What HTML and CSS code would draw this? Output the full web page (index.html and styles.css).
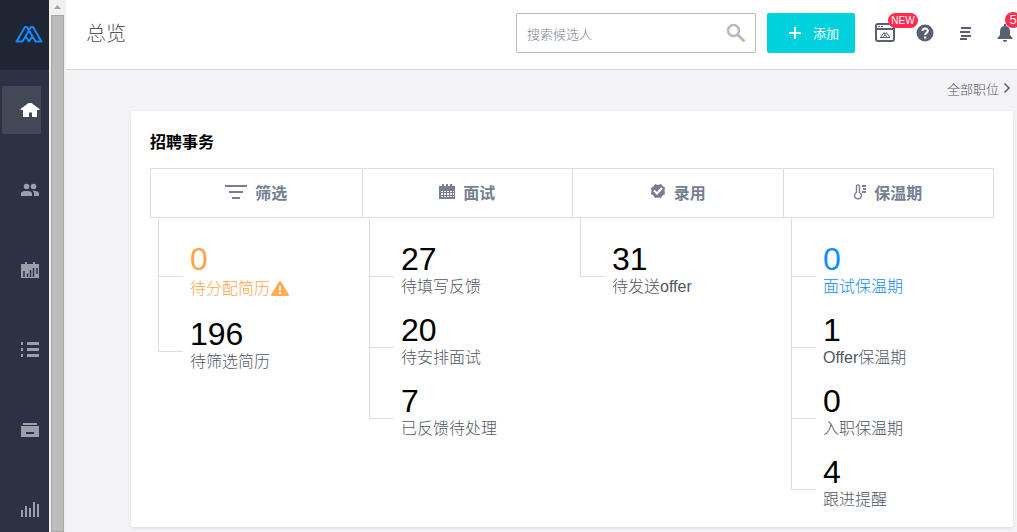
FILE: index.html
```html
<!DOCTYPE html>
<html lang="zh-CN">
<head>
<meta charset="utf-8">
<title>总览</title>
<link rel="stylesheet" href="styles.css">
</head>
<body>
<div class="app">
  <aside class="sidebar">
    <a class="logo" href="#" aria-label="首页">
      <svg width="28" height="18" viewBox="0 0 28 18" fill="none" stroke="#148aff" stroke-width="2" stroke-linejoin="round"><path d="M1.500 16.500 10 2H12L20.500 16.500H26.500L18 2H16L7.500 16.500ZM11 12 14 16.500 17 12"/></svg>
    </a>
    <nav class="nav">
      <a class="nav-item active" href="#" aria-label="总览">
        <svg width="20" height="16" viewBox="0 0 20 16" fill="#fff"><path d="M8.500 1H11.500L19.500 7V8H17V15H12V10.500H9V15H3V8H.5V7Z"/></svg>
      </a>
      <a class="nav-item" href="#" aria-label="候选人">
        <svg width="20" height="14" viewBox="0 0 20 14" fill="#9a9fac"><circle cx="6.500" cy="3.500" r="2.800"/><circle cx="13.500" cy="3.500" r="2.800"/><path d="M1 13V10.500C1 8.500 4 8 6.500 8S12 8.500 12 10.500V13ZM14 13V10.500C14 9.500 13.500 8.500 12.500 8 15 7.500 19 8.500 19 10.500V13Z"/></svg>
      </a>
      <a class="nav-item" href="#" aria-label="面试">
        <svg width="20" height="18" viewBox="0 0 20 18"><path fill="#9a9fac" d="M1 3H5V1H7V3H13V1H15V3H19V17H1Z"/><path stroke="#2c3243" stroke-width="1.500" d="M4 10V16M7.500 12.500V16M10.500 9V16M13.500 7V16M17 7V13"/></svg>
      </a>
      <a class="nav-item" href="#" aria-label="职位">
        <svg width="20" height="18" viewBox="0 0 20 18" fill="#9a9fac"><path d="M1 1H3V4H1ZM7 1H19V4H7ZM1 7H3V10H1ZM7 7H19V10H7ZM1 13H3V16H1ZM7 13H19V16H7Z"/></svg>
      </a>
      <a class="nav-item" href="#" aria-label="人才库">
        <svg width="20" height="16" viewBox="0 0 20 16"><path fill="#9a9fac" d="M3 1H17V3H3ZM1 4H19V15H1Z"/><path fill="#2c3243" d="M6 10H14V12H6Z"/></svg>
      </a>
      <a class="nav-item" href="#" aria-label="报表">
        <svg width="20" height="18" viewBox="0 0 20 18" fill="#9a9fac"><path d="M1 9H3V16H1ZM5 5H7V16H5ZM9 7H11V16H9ZM13 1H15V16H13ZM17 3H19V16H17Z"/></svg>
      </a>
    </nav>
  </aside>
  <div class="scroll-track">
    <svg width="7" height="4" viewBox="0 0 7 4" fill="#a3a3a3"><path d="M3.500 0 7 4H0Z"/></svg>
    <div class="scroll-thumb"></div>
  </div>

  <div class="page">
    <header class="topbar">
      <h1 class="page-title">总览</h1>
      <form class="search">
        <input class="search-input" type="text" placeholder="搜索候选人" aria-label="搜索候选人">
        <button class="search-button" type="button" aria-label="搜索">
          <svg width="20" height="20" viewBox="0 0 20 20" fill="none" stroke="#b5b9c5"><circle cx="7.500" cy="7.500" r="5.500" stroke-width="2.500"/><path stroke-width="3" d="M11.500 11.500 18.500 18.500"/></svg>
        </button>
      </form>
      <button class="add-button" type="button">
        <svg width="13" height="13" viewBox="0 0 13 13" stroke="#fff" stroke-width="2"><path d="M6 0V12M0 6H12"/></svg>
        <span class="add-text">添加</span>
      </button>
      <div class="tools">
        <button class="tool" type="button" aria-label="新功能">
          <svg width="20" height="20" viewBox="0 0 20 20" fill="none" stroke="#5a6070"><rect x="1" y="1" width="18" height="17" rx="2" stroke-width="2"/><path stroke-width="2" d="M1 6H19"/><path stroke-width="1" d="M3 3.500H5M6 3.500H8"/><path d="M5.500 14.500 9 9.500 12 14.500M8 14.500 11.500 9.500 15 14.500H5" stroke-width="1"/></svg>
          <span class="badge badge-new">NEW</span>
        </button>
        <button class="tool" type="button" aria-label="帮助">
          <svg width="18" height="18" viewBox="0 0 18 18"><circle cx="9" cy="9" r="8.500" fill="#5a6070"/><path d="M6.500 7C6.500 3.500 11.800 3.700 11.800 6.700 11.800 8.700 9.200 8.700 9.200 11" fill="none" stroke="#fff" stroke-width="2"/><path fill="#fff" d="M8 12.500H10.300V14.600H8Z"/></svg>
        </button>
        <button class="tool" type="button" aria-label="任务">
          <svg width="12" height="14" viewBox="0 0 12 14" fill="#5a6070"><path d="M2 1H12V3H2ZM1 5H11V7H1ZM2 9H12V11H2ZM1 12H8V14H1Z"/></svg>
        </button>
        <button class="tool" type="button" aria-label="通知">
          <svg width="16" height="18" viewBox="0 0 16 18" fill="#5a6070"><path d="M7 0H9V2C12 2.500 13 5 13 8V11L15.500 14V15H.5V14L3 11V8C3 5 4 2.500 7 2ZM6 16H10C10 18.500 6 18.500 6 16Z"/></svg>
          <span class="badge badge-count">5</span>
        </button>
      </div>
    </header>

    <main class="content">
      <a class="filter" href="#">全部职位
        <svg width="8" height="12" viewBox="0 0 8 12" fill="none" stroke="#5a6070" stroke-width="1.500"><path d="M1.500 1.500 6 6 1.500 10.500"/></svg>
      </a>
      <section class="card">
        <h2 class="card-title">招聘事务</h2>
        <div class="stages">
          <h3 class="stage">
            <svg width="22" height="16" viewBox="0 0 22 16" fill="#777d93"><path d="M0 1H22V3H0ZM4 7H18V9H4ZM7 13H15V15H7Z"/></svg>
            <span>筛选</span>
          </h3>
          <h3 class="stage">
            <svg width="16" height="16" viewBox="0 0 16 16"><path fill="#777d93" d="M0 2H3V0H5V2H7V0H9V2H11V0H13V2H16V15H0Z"/><path fill="#fff" d="M2 7H4V8H2ZM5 7H7V8H5ZM8 7H10V8H8ZM11 7H13V8H11ZM2 9H4V11H2ZM5 9H7V11H5ZM8 9H10V11H8ZM11 9H13V11H11ZM2 12H4V13H2ZM5 12H7V13H5ZM8 12H10V13H8ZM11 12H13V13H11ZM14 7H15V8H14ZM14 9H15V11H14ZM14 12H15V13H14Z"/></svg>
            <span>面试</span>
          </h3>
          <h3 class="stage">
            <svg width="16" height="16" viewBox="0 0 16 16"><path fill="#777d93" d="M5 0 8 1 11 0 12.500 2 15 3.500 14.500 7 15 10 12.500 11.500 11 14 8 13.500 5 14 3.500 11.500 1 10 1.500 7 1 4 3.500 2.500Z"/><path fill="none" stroke="#fff" stroke-width="2" d="M4 6.500 7 9.500 12 4"/></svg>
            <span>录用</span>
          </h3>
          <h3 class="stage">
            <svg width="12" height="16" viewBox="0 0 12 16" fill="none" stroke="#777d93"><path stroke-width="1.400" d="M2.500 8.500V2.500C2.500.3 5.500.3 5.500 2.500V8.500C9 10.500 7.500 14.800 4 14.800S-1 10.500 2.500 8.500Z"/><path stroke-width="2" d="M8 2H12M9 5H12M8 8H12"/></svg>
            <span>保温期</span>
          </h3>
        </div>
        <div class="trees">
          <ul class="tree">
            <li class="node warning"><span class="count">0</span><span class="label">待分配简历<svg width="18" height="16" viewBox="0 0 18 16"><path fill="#ffac52" stroke="#ffac52" stroke-width="2" stroke-linejoin="round" d="M9 1 17 14H1Z"/><path fill="#fff" d="M8 5H10L9.600 10H8.400ZM8 11H10V13H8Z"/></svg></span></li>
            <li class="node"><span class="count">196</span><span class="label">待筛选简历</span></li>
          </ul>
          <ul class="tree">
            <li class="node"><span class="count">27</span><span class="label">待填写反馈</span></li>
            <li class="node"><span class="count">20</span><span class="label">待安排面试</span></li>
            <li class="node"><span class="count">7</span><span class="label">已反馈待处理</span></li>
          </ul>
          <ul class="tree">
            <li class="node"><span class="count">31</span><span class="label">待发送offer</span></li>
          </ul>
          <ul class="tree">
            <li class="node current"><span class="count">0</span><span class="label">面试保温期</span></li>
            <li class="node"><span class="count">1</span><span class="label">Offer保温期</span></li>
            <li class="node"><span class="count">0</span><span class="label">入职保温期</span></li>
            <li class="node"><span class="count">4</span><span class="label">跟进提醒</span></li>
          </ul>
        </div>
      </section>
    </main>
  </div>
</div>
</body>
</html>
```

FILE: styles.css
```css
* { box-sizing: border-box; }
body {
  margin: 0;
  background: #f3f3f5;
  color: #515665;
  font-family: "Liberation Sans", "Noto Sans CJK SC", sans-serif;
  font-size: 16px;
}
h1, h2, h3, ul { margin: 0; padding: 0; }
button { padding: 0; border: 0; background: none; font-family: inherit; }
a { color: inherit; text-decoration: none; }
svg { display: block; flex: none; }

.app { display: flex; height: 100vh; overflow: hidden; }

.sidebar { flex: none; width: 49px; background: #2c3243; }
.logo {
  display: flex;
  align-items: center;
  justify-content: flex-end;
  height: 70px;
  padding: 0 6px 2px 0;
  background: #1f2533;
}
.nav { display: flex; flex-direction: column; gap: 32px; padding: 16px 8px 0 2px; }
.nav-item {
  display: flex;
  align-items: center;
  justify-content: flex-end;
  height: 48px;
  padding-right: 1px;
  border-radius: 2px;
}
.nav-item.active { background: #434857; }

.scroll-track {
  display: flex;
  flex-direction: column;
  align-items: center;
  flex: none;
  gap: 6px;
  width: 17px;
  padding: 5px 2px 0;
  background: #f1f1f1;
}
.scroll-thumb { flex: 1; width: 13px; border: 1px solid #a8a8a8; background: #bcbcbc; }

.page { flex: 1; min-width: 0; overflow: hidden; }
.topbar {
  display: flex;
  align-items: center;
  height: 70px;
  padding: 0 0 3px 20px;
  border-bottom: 1px solid #d9dade;
  margin-right: -8px;
  background: #fff;
}
.page-title { margin-right: auto; padding-top: 2px; font-size: 20px; font-weight: 300; line-height: 30px; }
.search {
  display: flex;
  align-items: center;
  width: 240px;
  height: 40px;
  margin-right: 11px;
  border: 1px solid #b5b9c5;
  border-radius: 2px;
}
.search-input {
  flex: 1;
  min-width: 0;
  padding: 3px 0 0 10px;
  border: 0;
  outline: 0;
  background: none;
  font: 300 13px "Liberation Sans", "Noto Sans CJK SC", sans-serif;
}
.search-input::placeholder { color: #7b8090; opacity: 1; }
.search-button { padding-right: 9px; }
.add-button {
  display: flex;
  align-items: center;
  justify-content: center;
  gap: 11px;
  width: 88px;
  height: 40px;
  padding-left: 6px;
  margin-right: 10px;
  border-radius: 2px;
  background: #00d1dc;
  color: #fff;
  font-size: 13px;
}
.add-text { padding-bottom: 2px; }
.tools { display: flex; }
.tool {
  position: relative;
  display: flex;
  align-items: center;
  justify-content: center;
  width: 40px;
  height: 40px;
}
.badge { position: absolute; background: #ff2c4f; color: #fff; text-align: center; }
.badge-new { top: 0; left: 23px; width: 30px; border-radius: 8px; font-size: 10px; line-height: 15px; z-index: 1; }
.badge-count { top: -1px; left: 20px; width: 16px; border-radius: 8px; font-size: 13px; line-height: 16px; }

.content { padding: 8px 4px 5px 65px; }
.filter {
  display: flex;
  align-items: center;
  justify-content: flex-end;
  gap: 4px;
  height: 20px;
  padding-right: 2px;
  margin-bottom: 13px;
  font-size: 13px;
  font-weight: 300;
}
.card {
  padding: 20px 19px 17px;
  border-radius: 2px;
  background: #fff;
  box-shadow: 0 1px 3px #dcdde3;
}
.card-title { margin-bottom: 13px; color: #000; font-size: 16px; line-height: 24px; }
.stages { display: grid; grid-template-columns: repeat(4, 1fr); border: 1px solid #dcdde0; }
.stage {
  display: flex;
  align-items: center;
  justify-content: center;
  gap: 8px;
  height: 48px;
  padding-bottom: 3px;
  color: #777d93;
  font-size: 16px;
}
.stage + .stage { border-left: 1px solid #dcdde0; }

.trees { display: grid; grid-template-columns: repeat(4, 1fr); }
.tree { padding: 8px 0 0 8px; list-style: none; }
.node { position: relative; padding: 15px 0 0 32px; }
.node::before {
  content: "";
  position: absolute;
  top: -8px;
  left: 0;
  width: 24px;
  height: 58px;
  border: solid #dcdde0;
  border-width: 0 0 1px 1px;
}
.node:not(:last-child)::after {
  content: "";
  position: absolute;
  top: 0;
  bottom: 0;
  left: 0;
  border-left: 1px solid #dcdde0;
}
.count { display: block; color: #000; font-size: 32px; line-height: 36px; }
.label { display: flex; align-items: center; font-weight: 300; line-height: 20px; }
.warning .count, .warning .label { color: #ffa544; }
.warning .label { gap: 1px; line-height: 24px; }
.current .count, .current .label { color: #148aff; }
```
